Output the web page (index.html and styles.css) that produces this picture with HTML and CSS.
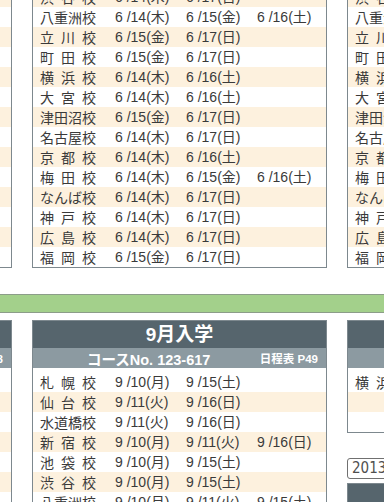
FILE: index.html
```html
<!DOCTYPE html>
<html lang="ja">
<head>
<meta charset="utf-8">
<title>開講日程</title>
<link rel="stylesheet" href="styles.css">
</head>
<body>
<div class="page">

  <!-- 6月入学: 校舎別の説明会日程 -->
  <section class="band band-top">
    <div class="card">
      <div class="body">
        <div class="row"></div><div class="row"></div><div class="row"></div><div class="row"></div>
        <div class="row"></div><div class="row"></div><div class="row"></div><div class="row"></div>
        <div class="row"></div><div class="row"></div><div class="row"></div><div class="row"></div>
        <div class="row"></div><div class="row"></div>
      </div>
    </div>

    <div class="card">
      <div class="body">
        <div class="row"><span class="nm"><i>渋</i><i>谷</i><i>校</i></span><span>6 /14(木)</span><span>6 /17(日)</span><span></span></div>
        <div class="row"><span class="nm"><i>八</i><i>重</i><i>洲</i><i>校</i></span><span>6 /14(木)</span><span>6 /15(金)</span><span>6 /16(土)</span></div>
        <div class="row"><span class="nm"><i>立</i><i>川</i><i>校</i></span><span>6 /15(金)</span><span>6 /17(日)</span><span></span></div>
        <div class="row"><span class="nm"><i>町</i><i>田</i><i>校</i></span><span>6 /15(金)</span><span>6 /17(日)</span><span></span></div>
        <div class="row"><span class="nm"><i>横</i><i>浜</i><i>校</i></span><span>6 /14(木)</span><span>6 /16(土)</span><span></span></div>
        <div class="row"><span class="nm"><i>大</i><i>宮</i><i>校</i></span><span>6 /14(木)</span><span>6 /16(土)</span><span></span></div>
        <div class="row"><span class="nm"><i>津</i><i>田</i><i>沼</i><i>校</i></span><span>6 /15(金)</span><span>6 /17(日)</span><span></span></div>
        <div class="row"><span class="nm"><i>名</i><i>古</i><i>屋</i><i>校</i></span><span>6 /14(木)</span><span>6 /17(日)</span><span></span></div>
        <div class="row"><span class="nm"><i>京</i><i>都</i><i>校</i></span><span>6 /14(木)</span><span>6 /16(土)</span><span></span></div>
        <div class="row"><span class="nm"><i>梅</i><i>田</i><i>校</i></span><span>6 /14(木)</span><span>6 /15(金)</span><span>6 /16(土)</span></div>
        <div class="row"><span class="nm"><i>な</i><i>ん</i><i>ば</i><i>校</i></span><span>6 /14(木)</span><span>6 /17(日)</span><span></span></div>
        <div class="row"><span class="nm"><i>神</i><i>戸</i><i>校</i></span><span>6 /14(木)</span><span>6 /17(日)</span><span></span></div>
        <div class="row"><span class="nm"><i>広</i><i>島</i><i>校</i></span><span>6 /14(木)</span><span>6 /17(日)</span><span></span></div>
        <div class="row"><span class="nm"><i>福</i><i>岡</i><i>校</i></span><span>6 /15(金)</span><span>6 /17(日)</span><span></span></div>
      </div>
    </div>

    <div class="card">
      <div class="body">
        <div class="row"><span class="nm"><i>渋</i><i>谷</i><i>校</i></span><span>6 /21(木)</span><span>6 /24(日)</span><span></span></div>
        <div class="row"><span class="nm"><i>八</i><i>重</i><i>洲</i><i>校</i></span><span>6 /21(木)</span><span>6 /23(土)</span><span></span></div>
        <div class="row"><span class="nm"><i>立</i><i>川</i><i>校</i></span><span>6 /22(金)</span><span>6 /24(日)</span><span></span></div>
        <div class="row"><span class="nm"><i>町</i><i>田</i><i>校</i></span><span>6 /22(金)</span><span>6 /24(日)</span><span></span></div>
        <div class="row"><span class="nm"><i>横</i><i>浜</i><i>校</i></span><span>6 /21(木)</span><span>6 /23(土)</span><span></span></div>
        <div class="row"><span class="nm"><i>大</i><i>宮</i><i>校</i></span><span>6 /21(木)</span><span>6 /23(土)</span><span></span></div>
        <div class="row"><span class="nm"><i>津</i><i>田</i><i>沼</i><i>校</i></span><span>6 /22(金)</span><span>6 /24(日)</span><span></span></div>
        <div class="row"><span class="nm"><i>名</i><i>古</i><i>屋</i><i>校</i></span><span>6 /21(木)</span><span>6 /24(日)</span><span></span></div>
        <div class="row"><span class="nm"><i>京</i><i>都</i><i>校</i></span><span>6 /21(木)</span><span>6 /23(土)</span><span></span></div>
        <div class="row"><span class="nm"><i>梅</i><i>田</i><i>校</i></span><span>6 /21(木)</span><span>6 /23(土)</span><span></span></div>
        <div class="row"><span class="nm"><i>な</i><i>ん</i><i>ば</i><i>校</i></span><span>6 /21(木)</span><span>6 /24(日)</span><span></span></div>
        <div class="row"><span class="nm"><i>神</i><i>戸</i><i>校</i></span><span>6 /21(木)</span><span>6 /24(日)</span><span></span></div>
        <div class="row"><span class="nm"><i>広</i><i>島</i><i>校</i></span><span>6 /21(木)</span><span>6 /24(日)</span><span></span></div>
        <div class="row"><span class="nm"><i>福</i><i>岡</i><i>校</i></span><span>6 /22(金)</span><span>6 /24(日)</span><span></span></div>
      </div>
    </div>
  </section>

  <div class="divider"></div>

  <!-- 9月入学 -->
  <section class="band band-bottom">
    <div class="card">
      <div class="hd">8月入学</div>
      <div class="sub"><span>コースNo. 123-616</span><small>日程表 P48</small></div>
      <div class="body pad">
        <div class="row"></div><div class="row"></div><div class="row"></div><div class="row"></div>
        <div class="row"></div><div class="row"></div><div class="row"></div>
      </div>
    </div>

    <div class="card">
      <div class="hd">9月入学</div>
      <div class="sub"><span>コースNo. 123-617</span><small>日程表 P49</small></div>
      <div class="body pad">
        <div class="row"><span class="nm"><i>札</i><i>幌</i><i>校</i></span><span>9 /10(月)</span><span>9 /15(土)</span><span></span></div>
        <div class="row"><span class="nm"><i>仙</i><i>台</i><i>校</i></span><span>9 /11(火)</span><span>9 /16(日)</span><span></span></div>
        <div class="row"><span class="nm"><i>水</i><i>道</i><i>橋</i><i>校</i></span><span>9 /11(火)</span><span>9 /16(日)</span><span></span></div>
        <div class="row"><span class="nm"><i>新</i><i>宿</i><i>校</i></span><span>9 /10(月)</span><span>9 /11(火)</span><span>9 /16(日)</span></div>
        <div class="row"><span class="nm"><i>池</i><i>袋</i><i>校</i></span><span>9 /10(月)</span><span>9 /15(土)</span><span></span></div>
        <div class="row"><span class="nm"><i>渋</i><i>谷</i><i>校</i></span><span>9 /10(月)</span><span>9 /15(土)</span><span></span></div>
        <div class="row"><span class="nm"><i>八</i><i>重</i><i>洲</i><i>校</i></span><span>9 /10(月)</span><span>9 /11(火)</span><span>9 /15(土)</span></div>
      </div>
    </div>

    <div class="side">
      <div class="card">
        <div class="hd">10月入学</div>
        <div class="sub"><span>コースNo. 123-618</span><small>日程表 P50</small></div>
        <div class="body pad">
          <div class="row"><span class="nm"><i>横</i><i>浜</i><i>校</i></span><span>10 /9(火)</span><span>10 /13(土)</span><span></span></div>
          <div class="row"></div>
          <div class="row"></div>
        </div>
      </div>
      <div class="tag">2013年度 入学</div>
      <div class="card next"><div class="hd"></div></div>
    </div>
  </section>

</div>
</body>
</html>
```

FILE: styles.css
```css
html, body {
  margin: 0;
  padding: 0;
  background: #fff;
  overflow: hidden;
}

body {
  font-family: "Liberation Sans", "Noto Sans CJK JP", sans-serif;
  color: #3a3a3a;
}

/* the schedule sheet is wider than the window; it is scrolled sideways */
.page {
  width: 960px;
  margin-left: -283px;
}

.band {
  display: flex;
  align-items: flex-start;
  gap: 20px;
}

.band-top {
  margin-top: -14px;
}

.band-bottom {
  margin-top: 7px;
}

.card {
  flex: none;
  width: 295px;
  box-sizing: border-box;
  border: 1px solid #7d888e;
  background: #fff;
}

.body.pad {
  padding-top: 4px;
}

.row {
  display: grid;
  grid-template-columns: 75px 71px 71px 1fr;
  align-items: center;
  height: 20px;
  padding-left: 7px;
  font-size: 14px;
  line-height: 20px;
  white-space: nowrap;
}

.row:nth-child(odd) {
  background: #fdf1de;
}

.band-bottom .row:nth-child(odd) {
  background: #fff;
}

.band-bottom .row:nth-child(even) {
  background: #fdf1de;
}

.nm {
  display: flex;
  justify-content: space-between;
  width: 56px;
  font-family: "Noto Sans CJK JP", sans-serif;
}

.nm i {
  font-style: normal;
}

.hd {
  height: 27px;
  background: #56656d;
  color: #fff;
  font-weight: bold;
  font-size: 19px;
  line-height: 27px;
  text-align: center;
}

.sub {
  display: flex;
  align-items: center;
  justify-content: space-between;
  height: 20px;
  padding: 0 8px 0 54px;
  background: #8c9aa1;
  color: #fff;
  font-weight: bold;
  font-size: 14.5px;
  white-space: nowrap;
}

.sub small {
  font-size: 11.5px;
}

.divider {
  margin-top: 26px;
  height: 17px;
  background: #a3d08b;
  border-top: 1px solid #8c9d89;
  border-bottom: 1px solid #8c9d89;
}

.side {
  display: flex;
  flex-direction: column;
  align-items: flex-start;
  width: 295px;
  flex: none;
}

.tag {
  margin-top: 25px;
  height: 19px;
  padding: 0 4px;
  border: 1px solid #707070;
  border-radius: 3px;
  font-family: "DejaVu Sans Condensed", "Noto Sans CJK JP", sans-serif;
  font-size: 15px;
  line-height: 19px;
  color: #4f4f4f;
  white-space: nowrap;
}

.card.next {
  margin-top: 4px;
}

.card.next .hd {
  height: 30px;
}
```
